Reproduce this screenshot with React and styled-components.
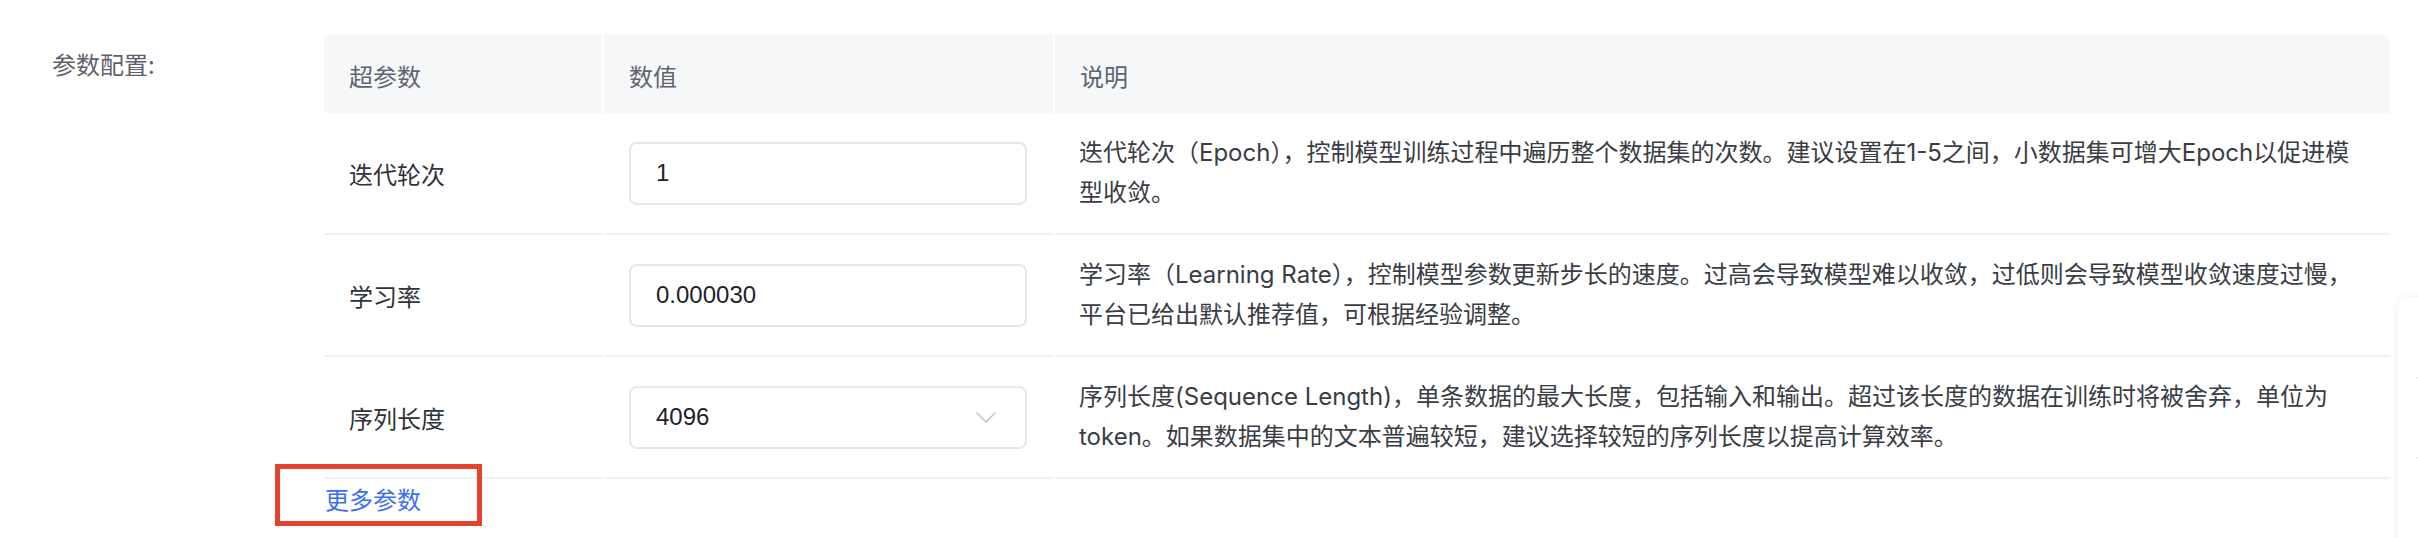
import React from "react";
import styled, { createGlobalStyle } from "styled-components";

const GlobalStyle = createGlobalStyle`
  html, body {
    margin: 0;
    padding: 0;
    background: #ffffff;
    overflow: hidden;
  }
  * {
    box-sizing: border-box;
  }
`;

const params = [
  {
    name: "迭代轮次",
    value: "1",
    type: "input",
    desc: [
      "迭代轮次（Epoch），控制模型训练过程中遍历整个数据集的次数。建议设置在1-5之间，小数据集可增大Epoch以促进模",
      "型收敛。",
    ],
  },
  {
    name: "学习率",
    value: "0.000030",
    type: "input",
    desc: [
      "学习率（Learning Rate），控制模型参数更新步长的速度。过高会导致模型难以收敛，过低则会导致模型收敛速度过慢，",
      "平台已给出默认推荐值，可根据经验调整。",
    ],
  },
  {
    name: "序列长度",
    value: "4096",
    type: "select",
    desc: [
      "序列长度(Sequence Length)，单条数据的最大长度，包括输入和输出。超过该长度的数据在训练时将被舍弃，单位为",
      "token。如果数据集中的文本普遍较短，建议选择较短的序列长度以提高计算效率。",
    ],
  },
];

const App = () => {
  return (
    <>
      <GlobalStyle />
      <Page>
        <FormLabel>参数配置:</FormLabel>
        <FormContent>
          <Table>
            <HeadCell $first>超参数</HeadCell>
            <HeadCell>数值</HeadCell>
            <HeadCell $last>说明</HeadCell>
            {params.map((p) => (
              <React.Fragment key={p.name}>
                <NameCell>{p.name}</NameCell>
                <ValueCell>
                  <ValueBox>
                    <ValueText>{p.value}</ValueText>
                    {p.type === "select" && (
                      <svg width="20" height="11" viewBox="0 0 20 11" fill="none">
                        <polyline
                          points="1,1 10,10 19,1"
                          stroke="#bfc3ca"
                          strokeWidth="1.6"
                          strokeLinecap="round"
                          strokeLinejoin="round"
                        />
                      </svg>
                    )}
                  </ValueBox>
                </ValueCell>
                <DescCell>
                  {p.desc.map((line, i) => (
                    <React.Fragment key={i}>
                      {i > 0 && <br />}
                      {line}
                    </React.Fragment>
                  ))}
                </DescCell>
              </React.Fragment>
            ))}
          </Table>
          <MoreRow>
            <Annotation />
            <MoreLink>更多参数</MoreLink>
          </MoreRow>
        </FormContent>
      </Page>
      <SidePanel>
        <SideItem />
        <SideItem $line />
        <SideItem $line />
      </SidePanel>
    </>
  );
};

export default App;

const Page = styled.div`
  display: flex;
  min-height: 538px;
  padding: 34px 28px 0 52px;
  font-family: Inter, "Noto Sans CJK SC", sans-serif;
`;

const FormLabel = styled.div`
  width: 272px;
  flex-shrink: 0;
  margin-top: 10px;
  font-size: 24px;
  line-height: 40px;
  color: #5d616b;
  font-family: "Noto Sans CJK SC", sans-serif;
`;

const FormContent = styled.div`
  flex: 1;
  display: flex;
  flex-direction: column;
`;

const Table = styled.div`
  display: grid;
  grid-template-columns: 278px 449px 1fr;
  column-gap: 2px;
`;

const HeadCell = styled.div`
  height: 79px;
  display: flex;
  align-items: center;
  padding: 4px 25px 0;
  background: #f6f7f9;
  color: #5f6470;
  font-size: 24px;
  font-family: "Noto Sans CJK SC", sans-serif;
  border-top-left-radius: ${({ $first }) => ($first ? "10px" : "0")};
  border-top-right-radius: ${({ $last }) => ($last ? "10px" : "0")};
`;

const BodyCell = styled.div`
  height: 122px;
  display: flex;
  align-items: center;
  padding: 0 25px;
  border-bottom: 2px solid #f0f1f2;
  font-size: 24px;
`;

const NameCell = styled(BodyCell)`
  color: #30333a;
  font-family: "Noto Sans CJK SC", sans-serif;
`;

const ValueCell = styled(BodyCell)``;

const ValueBox = styled.div`
  width: 398px;
  height: 63px;
  display: flex;
  align-items: center;
  justify-content: space-between;
  padding: 0 29px 0 25px;
  border: 2px solid #e6e7e9;
  border-radius: 8px;
  background: #ffffff;
`;

const ValueText = styled.span`
  font-family: "Liberation Sans", Arial, sans-serif;
  font-size: 24px;
  color: #1f2229;
`;

const DescCell = styled(BodyCell)`
  padding: 0 24px;
  line-height: 40px;
  color: #3a3d44;
  white-space: nowrap;
`;

const MoreRow = styled.div`
  position: relative;
  height: 42px;
`;

const MoreLink = styled.a`
  display: inline-block;
  padding-left: 1px;
  font-size: 24px;
  line-height: 40px;
  color: #3d6ef0;
  font-family: "Noto Sans CJK SC", sans-serif;
  cursor: pointer;
`;

const Annotation = styled.div`
  position: absolute;
  left: -49px;
  top: -15px;
  width: 207px;
  height: 62px;
  border: 5px solid #e5432b;
  pointer-events: none;
`;

const SidePanel = styled.div`
  position: fixed;
  left: 2398px;
  top: 297px;
  width: 60px;
  height: 260px;
  background: #ffffff;
  border-top-left-radius: 10px;
  box-shadow: 0 0 10px rgba(0, 0, 0, 0.07);
  display: flex;
  flex-direction: column;
  padding-left: 17px;
`;

const SideItem = styled.div`
  height: 80px;
  border-top: ${({ $line }) => ($line ? "2px solid #eeeff1" : "none")};
`;
